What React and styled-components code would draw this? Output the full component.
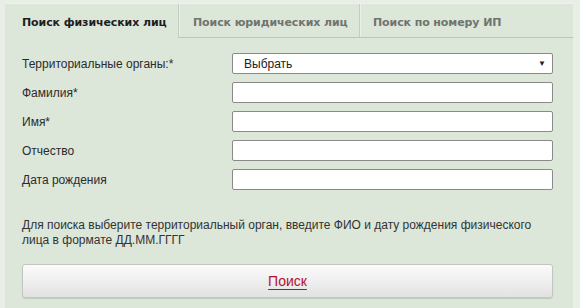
import React from 'react';
import styled, { createGlobalStyle } from 'styled-components';

const GlobalStyle = createGlobalStyle`
  body {
    margin: 0;
    background: #e9efe7;
    font-family: "Liberation Sans", Arial, sans-serif;
  }
`;

const Page = styled.div`
  width: 580px;
  height: 308px;
  padding: 3px 7px 0 5px;
  box-sizing: border-box;
  overflow: hidden;
`;

const Panel = styled.div`
  background: #dce6d9;
  border-top: 1px solid #edf2ec;
  height: 100%;
`;

const Tabs = styled.div`
  display: flex;
  height: 34px;
`;

const Tab = styled.div`
  display: flex;
  align-items: center;
  width: ${p => p.$w}px;
  padding: 3px 0 0 ${p => p.$pl}px;
  box-sizing: border-box;
  font-family: "DejaVu Sans", Verdana, sans-serif;
  font-weight: bold;
  font-size: 11px;
  color: ${p => (p.$active ? '#1e1e1e' : '#6f746e')};
  border-bottom: 1px solid ${p => (p.$active ? 'transparent' : '#bcc7ba')};
  border-left: ${p => (p.$first ? 'none' : '1px solid #c3cdc1')};
  box-shadow: ${p => (p.$first ? 'none' : 'inset 1px 0 0 #eaf0e8')};
  letter-spacing: -0.1px;
`;

const TabFill = styled.div`
  flex: 1;
  border-bottom: 1px solid #bcc7ba;
`;

const Form = styled.div`
  padding: 15px 15px 0 17px;
  display: flex;
  flex-direction: column;
  gap: 8px;
`;

const Row = styled.div`
  display: flex;
  align-items: center;
  height: 21px;
`;

const Label = styled.label`
  width: 210px;
  font-size: 12px;
  color: #2b2b2b;
`;

const Input = styled.div`
  width: 321px;
  height: 21px;
  box-sizing: border-box;
  background: #fff;
  border: 1px solid #8a8a8a;
  border-radius: 2px;
`;

const Select = styled(Input)`
  display: flex;
  align-items: center;
  justify-content: space-between;
  padding: 0 6px 0 11px;
  font-size: 12px;
  color: #222;
  & span.arrow {
    font-size: 8px;
  }
`;

const Help = styled.p`
  margin: 20px 0 0;
  font-size: 12px;
  line-height: 15px;
  color: #333;
  width: 530px;
`;

const Button = styled.div`
  margin-top: 8px;
  width: 531px;
  height: 34px;
  box-sizing: border-box;
  border: 1px solid #c4c4c4;
  border-radius: 3px;
  background: linear-gradient(#fbfbfb, #e2e2e2);
  box-shadow: 0 1px 1px rgba(0, 0, 0, 0.12);
  display: flex;
  align-items: center;
  justify-content: center;
  font-size: 14px;
  color: #b3122e;
  text-decoration: underline;
  text-underline-offset: 3px;
`;

const fields = ['Фамилия*', 'Имя*', 'Отчество', 'Дата рождения'];

export default function App() {
  return (
    <Page>
      <GlobalStyle />
      <Panel>
        <Tabs>
          <Tab $active $first $w={173} $pl={17}>Поиск физических лиц</Tab>
          <Tab $w={181} $pl={14}>Поиск юридических лиц</Tab>
          <Tab $w={181} $pl={13}>Поиск по номеру ИП</Tab>
          <TabFill />
        </Tabs>
        <Form>
          <Row>
            <Label>Территориальные органы:*</Label>
            <Select>
              <span>Выбрать</span>
              <span className="arrow">▼</span>
            </Select>
          </Row>
          {fields.map(f => (
            <Row key={f}>
              <Label>{f}</Label>
              <Input />
            </Row>
          ))}
          <Help>
            Для поиска выберите территориальный орган, введите ФИО и дату рождения физического
            лица в формате ДД.ММ.ГГГГ
          </Help>
          <Button>Поиск</Button>
        </Form>
      </Panel>
    </Page>
  );
}
